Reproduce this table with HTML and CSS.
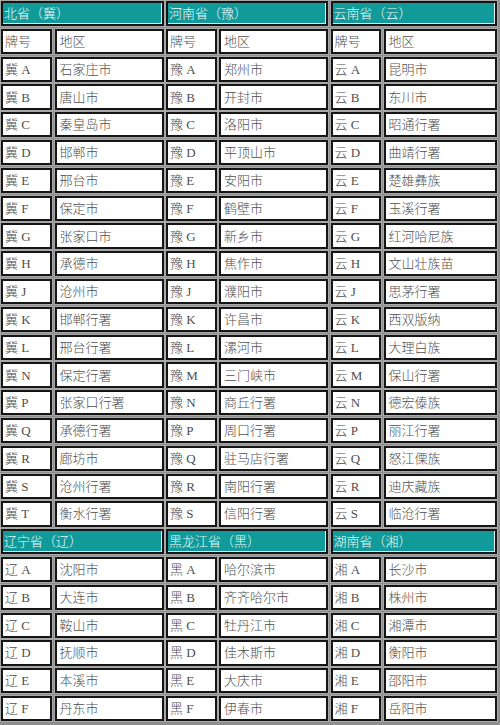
FILE: index.html
```html
<!DOCTYPE html>
<html lang="zh">
<head>
<meta charset="utf-8">
<title>车牌号码</title>
<link rel="stylesheet" href="styles.css">
</head>
<body>
<div class="sheet">
  <div class="cell head span2">北省（冀）</div>
  <div class="cell head span2">河南省（豫）</div>
  <div class="cell head span2">云南省（云）</div>

  <div class="cell code">牌号</div><div class="cell area">地区</div>
  <div class="cell code">牌号</div><div class="cell area">地区</div>
  <div class="cell code">牌号</div><div class="cell area">地区</div>

  <div class="cell code">冀 A</div><div class="cell area">石家庄市</div>
  <div class="cell code">豫 A</div><div class="cell area">郑州市</div>
  <div class="cell code">云 A</div><div class="cell area">昆明市</div>

  <div class="cell code">冀 B</div><div class="cell area">唐山市</div>
  <div class="cell code">豫 B</div><div class="cell area">开封市</div>
  <div class="cell code">云 B</div><div class="cell area">东川市</div>

  <div class="cell code">冀 C</div><div class="cell area">秦皇岛市</div>
  <div class="cell code">豫 C</div><div class="cell area">洛阳市</div>
  <div class="cell code">云 C</div><div class="cell area">昭通行署</div>

  <div class="cell code">冀 D</div><div class="cell area">邯郸市</div>
  <div class="cell code">豫 D</div><div class="cell area">平顶山市</div>
  <div class="cell code">云 D</div><div class="cell area">曲靖行署</div>

  <div class="cell code">冀 E</div><div class="cell area">邢台市</div>
  <div class="cell code">豫 E</div><div class="cell area">安阳市</div>
  <div class="cell code">云 E</div><div class="cell area">楚雄彝族</div>

  <div class="cell code">冀 F</div><div class="cell area">保定市</div>
  <div class="cell code">豫 F</div><div class="cell area">鹤壁市</div>
  <div class="cell code">云 F</div><div class="cell area">玉溪行署</div>

  <div class="cell code">冀 G</div><div class="cell area">张家口市</div>
  <div class="cell code">豫 G</div><div class="cell area">新乡市</div>
  <div class="cell code">云 G</div><div class="cell area">红河哈尼族</div>

  <div class="cell code">冀 H</div><div class="cell area">承德市</div>
  <div class="cell code">豫 H</div><div class="cell area">焦作市</div>
  <div class="cell code">云 H</div><div class="cell area">文山壮族苗</div>

  <div class="cell code">冀 J</div><div class="cell area">沧州市</div>
  <div class="cell code">豫 J</div><div class="cell area">濮阳市</div>
  <div class="cell code">云 J</div><div class="cell area">思茅行署</div>

  <div class="cell code">冀 K</div><div class="cell area">邯郸行署</div>
  <div class="cell code">豫 K</div><div class="cell area">许昌市</div>
  <div class="cell code">云 K</div><div class="cell area">西双版纳</div>

  <div class="cell code">冀 L</div><div class="cell area">邢台行署</div>
  <div class="cell code">豫 L</div><div class="cell area">漯河市</div>
  <div class="cell code">云 L</div><div class="cell area">大理白族</div>

  <div class="cell code">冀 N</div><div class="cell area">保定行署</div>
  <div class="cell code">豫 M</div><div class="cell area">三门峡市</div>
  <div class="cell code">云 M</div><div class="cell area">保山行署</div>

  <div class="cell code">冀 P</div><div class="cell area">张家口行署</div>
  <div class="cell code">豫 N</div><div class="cell area">商丘行署</div>
  <div class="cell code">云 N</div><div class="cell area">德宏傣族</div>

  <div class="cell code">冀 Q</div><div class="cell area">承德行署</div>
  <div class="cell code">豫 P</div><div class="cell area">周口行署</div>
  <div class="cell code">云 P</div><div class="cell area">丽江行署</div>

  <div class="cell code">冀 R</div><div class="cell area">廊坊市</div>
  <div class="cell code">豫 Q</div><div class="cell area">驻马店行署</div>
  <div class="cell code">云 Q</div><div class="cell area">怒江傈族</div>

  <div class="cell code">冀 S</div><div class="cell area">沧州行署</div>
  <div class="cell code">豫 R</div><div class="cell area">南阳行署</div>
  <div class="cell code">云 R</div><div class="cell area">迪庆藏族</div>

  <div class="cell code">冀 T</div><div class="cell area">衡水行署</div>
  <div class="cell code">豫 S</div><div class="cell area">信阳行署</div>
  <div class="cell code">云 S</div><div class="cell area">临沧行署</div>

  <div class="cell head span2">辽宁省（辽）</div>
  <div class="cell head span2">黑龙江省（黑）</div>
  <div class="cell head span2">湖南省（湘）</div>

  <div class="cell code">辽 A</div><div class="cell area">沈阳市</div>
  <div class="cell code">黑 A</div><div class="cell area">哈尔滨市</div>
  <div class="cell code">湘 A</div><div class="cell area">长沙市</div>

  <div class="cell code">辽 B</div><div class="cell area">大连市</div>
  <div class="cell code">黑 B</div><div class="cell area">齐齐哈尔市</div>
  <div class="cell code">湘 B</div><div class="cell area">株州市</div>

  <div class="cell code">辽 C</div><div class="cell area">鞍山市</div>
  <div class="cell code">黑 C</div><div class="cell area">牡丹江市</div>
  <div class="cell code">湘 C</div><div class="cell area">湘潭市</div>

  <div class="cell code">辽 D</div><div class="cell area">抚顺市</div>
  <div class="cell code">黑 D</div><div class="cell area">佳木斯市</div>
  <div class="cell code">湘 D</div><div class="cell area">衡阳市</div>

  <div class="cell code">辽 E</div><div class="cell area">本溪市</div>
  <div class="cell code">黑 E</div><div class="cell area">大庆市</div>
  <div class="cell code">湘 E</div><div class="cell area">邵阳市</div>

  <div class="cell code">辽 F</div><div class="cell area">丹东市</div>
  <div class="cell code">黑 F</div><div class="cell area">伊春市</div>
  <div class="cell code">湘 F</div><div class="cell area">岳阳市</div>
</div>
</body>
</html>
```

FILE: styles.css
```css
html, body {
  margin: 0;
  padding: 0;
  background: #8e8e8e;
}

body {
  width: 500px;
  height: 725px;
  overflow: hidden;
  font-family: "Liberation Serif", "Noto Sans CJK SC", serif;
  font-size: 13px;
  font-weight: 300;
  color: #4e4e4e;
}

.sheet {
  display: grid;
  grid-template-columns: 51px 109px 50.5px 109px 50.5px 113px;
  grid-auto-rows: 25.3px;
  column-gap: 2.5px;
  row-gap: 2.5px;
  padding: 1px 0 0 1px;
}

.cell {
  box-sizing: border-box;
  background: #ffffff;
  border: 2px solid #151515;
  box-shadow: 0 0 0 1px #a8a8a8;
  display: flex;
  align-items: center;
  white-space: nowrap;
  overflow: hidden;
  line-height: 1;
}

.span2 {
  grid-column: span 2;
}

.head {
  background: #109a9a;
  color: #f2fbfb;
  padding-left: 1px;
  box-shadow: inset -1px -1px 0 #e6f4f4, 0 0 0 1px #a8a8a8;
}

.code {
  padding-left: 2px;
}

.area {
  padding-left: 3px;
}
```
